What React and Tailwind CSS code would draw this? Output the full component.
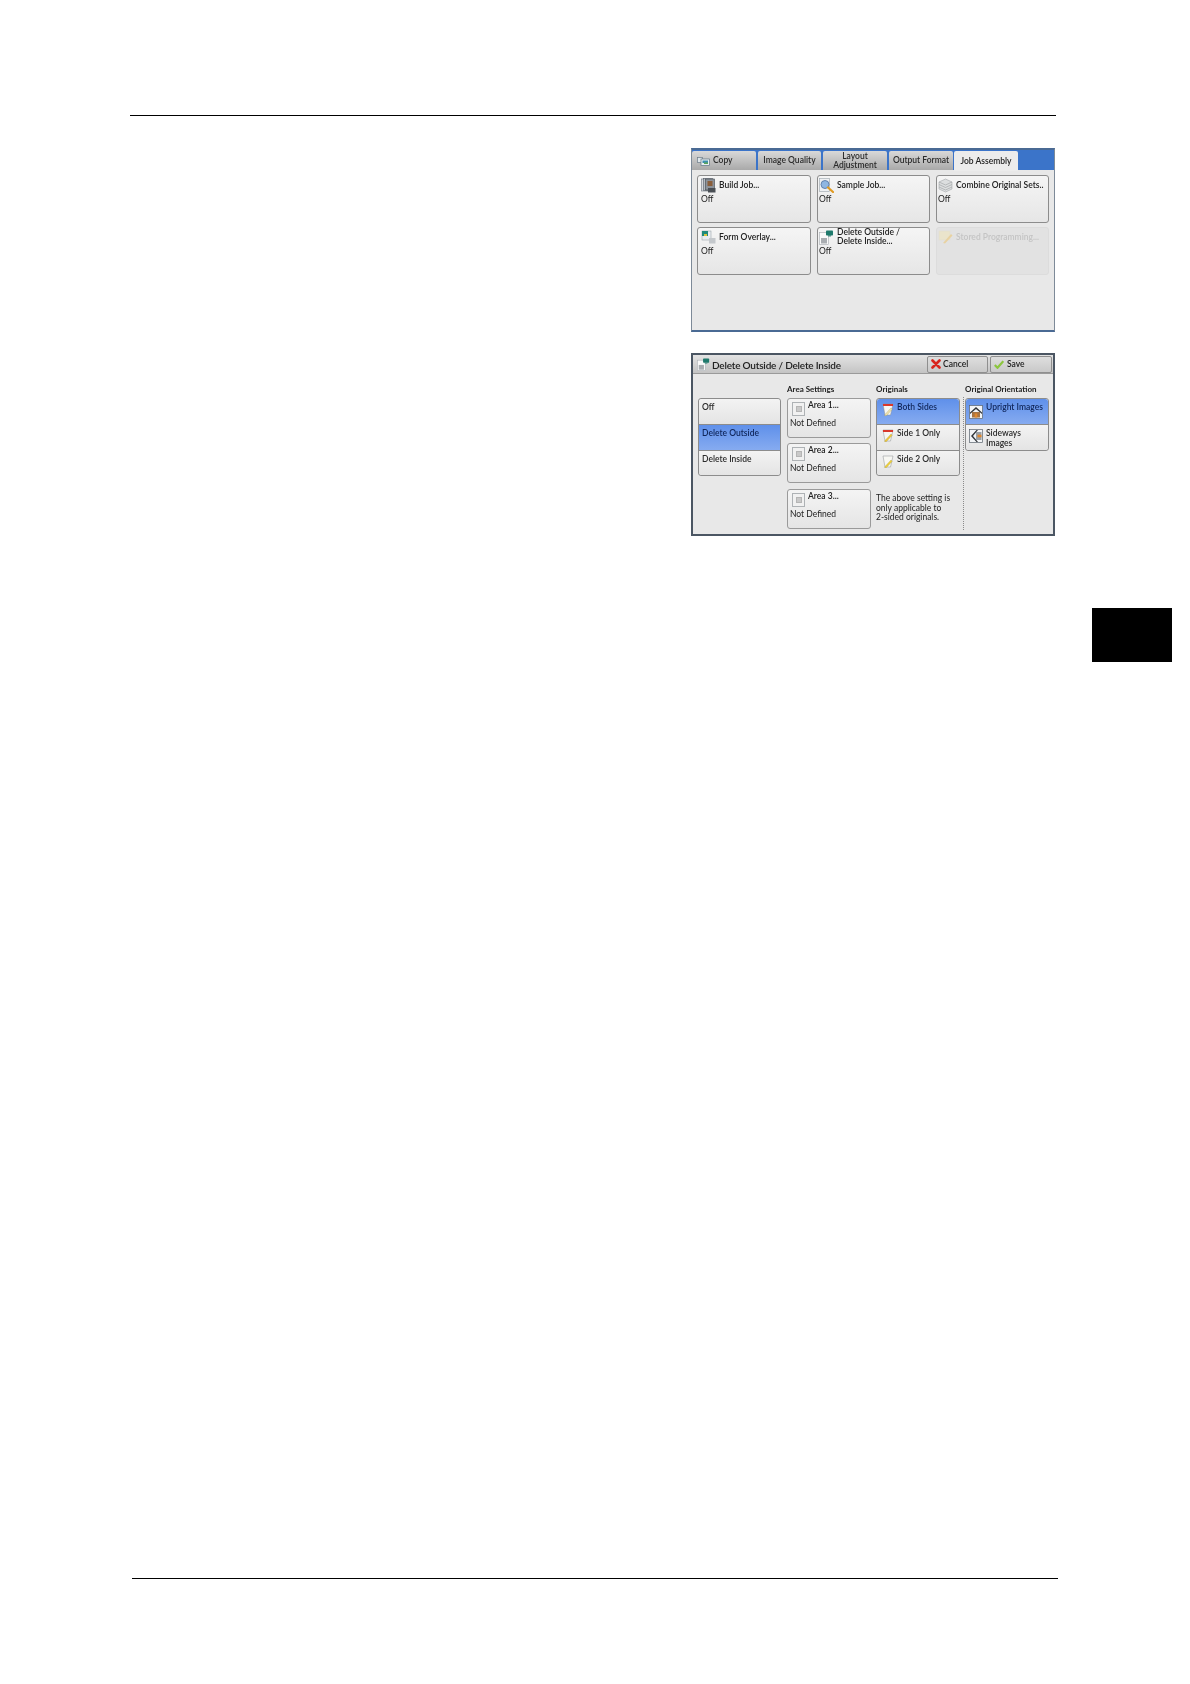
import React from 'react';

const fontFamily = 'font-["Lato","Open_Sans","Liberation_Sans",sans-serif]';

// Small drawings from the copier panel
const CopyIcon = () => (
  <svg viewBox="0 0 13 11" className="w-[13px] h-[11px] shrink-0">
    <rect x="0.5" y="2.5" width="5" height="5" fill="#dfe6ea" stroke="#6b7b88" strokeWidth="0.7" />
    <rect x="4" y="4" width="8.5" height="6.5" fill="#e8eef2" stroke="#5f7484" strokeWidth="0.7" />
    <rect x="5.5" y="5.5" width="5.5" height="2.5" fill="#3c8fb0" />
    <rect x="7" y="7.5" width="4" height="1.5" fill="#5aa65a" />
  </svg>
);

const BuildJobIcon = () => (
  <svg viewBox="0 0 15 15" className="w-[15px] h-[15px] shrink-0">
    <rect x="0.5" y="1" width="9" height="12" fill="#d7dade" stroke="#6d7680" strokeWidth="0.6" />
    <rect x="2.5" y="0.5" width="9" height="12" fill="#b8bdc4" stroke="#555d66" strokeWidth="0.6" />
    <rect x="4.5" y="1" width="9" height="11" fill="#8d939b" stroke="#3f464e" strokeWidth="0.6" />
    <rect x="6.5" y="3" width="5" height="5" fill="#8a5f3c" />
    <rect x="7" y="10" width="7.5" height="4.5" fill="#4a4f55" />
  </svg>
);

const SampleIcon = () => (
  <svg viewBox="0 0 15 15" className="w-[15px] h-[15px] shrink-0">
    <rect x="0.5" y="0.5" width="10" height="13" fill="#eef0f3" stroke="#9aa3ab" strokeWidth="0.6" />
    <circle cx="6" cy="6.5" r="4" fill="#8fb6e2" stroke="#5a7ba8" strokeWidth="0.9" />
    <path d="M9 9.5 L14 14" stroke="#e09a22" strokeWidth="2.2" strokeLinecap="round" />
  </svg>
);

const CombineIcon = () => (
  <svg viewBox="0 0 15 15" className="w-[15px] h-[15px] shrink-0">
    <path d="M7.5 1 L14 4 V11 L7.5 14 L1 11 V4 Z" fill="#dcdedf" stroke="#a5a8ab" strokeWidth="0.6" />
    <path d="M1 4 L7.5 7 L14 4 M1 6.5 L7.5 9.5 L14 6.5 M1 9 L7.5 12 L14 9" fill="none" stroke="#9a9da0" strokeWidth="0.6" />
  </svg>
);

const OverlayIcon = () => (
  <svg viewBox="0 0 15 14" className="w-[15px] h-[14px] shrink-0">
    <rect x="1" y="1" width="9" height="9" fill="#e9edf0" stroke="#8d979f" strokeWidth="0.5" />
    <rect x="1" y="1" width="6" height="5" fill="#1f8a7a" />
    <rect x="3" y="4" width="3" height="2" fill="#d8c23c" />
    <rect x="8" y="8" width="6.5" height="5.5" fill="#c4c8cc" />
  </svg>
);

const DeleteIcon = ({ className = 'w-[15px] h-[15px]' }) => (
  <svg viewBox="0 0 15 15" className={`${className} shrink-0`}>
    <rect x="0.5" y="2.5" width="9" height="12" fill="#fafafa" stroke="#a5abb0" strokeWidth="0.6" />
    <rect x="2" y="8" width="6" height="5.5" fill="#a9adb1" />
    <rect x="7" y="0.5" width="7" height="5" rx="0.8" fill="#1f7a6c" />
    <rect x="9" y="5" width="3" height="1.5" fill="#4a8f84" />
  </svg>
);

const StoredIcon = () => (
  <svg viewBox="0 0 15 14" className="w-[15px] h-[14px] shrink-0 opacity-60">
    <rect x="1" y="1" width="11" height="9" fill="#f0e6bc" stroke="#e2dcc6" strokeWidth="0.6" />
    <path d="M5 13 L13 4 L14.5 5.5 L7 13.5 Z" fill="#ecc877" />
  </svg>
);

const SideIcon = ({ band, pencil }) => (
  <svg viewBox="0 0 12 13" className="w-[12px] h-[13px] mt-[1px] shrink-0">
    <path d="M1 1 H11 L8.5 12 H3 Z" fill="#f7f7f3" stroke="#8b8f92" strokeWidth="0.5" />
    {band && <rect x="1" y="1" width="10" height="2" fill={band} />}
    <path d="M3 11.5 L9 5 L10.2 6.2 L4.5 12.5 L2.6 12.8 Z" fill={pencil} stroke="#9c8a3a" strokeWidth="0.3" />
  </svg>
);

const UprightIcon = () => (
  <svg viewBox="0 0 14 14" className="w-[14px] h-[14px] mt-[3px] shrink-0">
    <rect x="0.5" y="0.5" width="13" height="13" fill="#f2f4f6" stroke="#59636d" strokeWidth="0.7" />
    <path d="M7 2 L13 7.5 V9 L7 4 L1 9 V7.5 Z" fill="#2f3338" />
    <rect x="3" y="7" width="8" height="5.5" fill="#a77443" />
    <rect x="5.7" y="8.5" width="2.6" height="4" fill="#e0872d" />
  </svg>
);

const SidewaysIcon = () => (
  <svg viewBox="0 0 14 14" className="w-[14px] h-[14px] mt-[1px] shrink-0">
    <rect x="0.5" y="0.5" width="13" height="13" fill="#f2f4f6" stroke="#59636d" strokeWidth="0.7" />
    <path d="M2 7 L7.5 1 H9 L4 7 L9 13 H7.5 Z" fill="#2f3338" />
    <rect x="7" y="3" width="5.5" height="8" fill="#9aa0a6" />
    <rect x="8.5" y="5.7" width="4" height="2.6" fill="#e0872d" />
  </svg>
);

const CancelIcon = () => (
  <svg viewBox="0 0 10 10" className="w-[10px] h-[10px] shrink-0">
    <path d="M1.5 1.5 L8.5 8.5 M8.5 1.5 L1.5 8.5" stroke="#d8251d" strokeWidth="2.6" strokeLinecap="round" />
  </svg>
);

const SaveIcon = () => (
  <svg viewBox="0 0 10 9" className="w-[10px] h-[9px] shrink-0">
    <path d="M0.8 5 L3.5 7.8 L9.3 1.2" fill="none" stroke="#8cc63e" strokeWidth="2.2" />
  </svg>
);

const Tab = ({ width, children }) => (
  <div className={`${width} h-[19px] mt-px rounded-t-[2px] bg-gradient-to-b from-[#d9d9d9] to-[#a9a9a9] flex items-center justify-center text-center text-[8.5px] leading-[9px] font-semibold text-[#2b2b2b] whitespace-nowrap`}>
    <span>{children}</span>
  </div>
);

const FeatureButton = ({ icon, title, wide, disabled, height = 'h-[48px]' }) => (
  <div className={`${wide ? 'w-[114px] px-[3px]' : 'w-[113px] px-[1px]'} ${height} rounded-[3px] border ${disabled ? 'border-[#dcdcdc] bg-[#e2e2e2]' : 'border-[#8c8c8c] bg-gradient-to-b from-[#f5f5f5] to-[#e6e6e6]'}`}>
    <div className="flex items-center gap-[3px] h-[18px]">
      {icon}
      <span className={`text-[8.5px] leading-[9px] font-semibold whitespace-nowrap ${disabled ? 'text-[#c4c4c4]' : 'text-[#222]'}`}>{title}</span>
    </div>
    {!disabled && <div className="text-[8.5px] leading-[9px] mt-[1px] text-[#222]">Off</div>}
  </div>
);

const AreaButton = ({ name, height = 'h-[40px]' }) => (
  <div className={`${height} rounded-[3px] border border-[#9a9a9a] bg-gradient-to-b from-[#f4f4f4] to-[#e5e5e5] pl-[2px] pt-[1px]`}>
    <div className="flex gap-[3px] h-[16px]">
      <div className="w-[13px] h-[14px] ml-[2px] mt-[2px] border border-[#aeb2b5] bg-[#f1f1f1] flex items-center justify-center shrink-0">
        <div className="w-[6px] h-[6px] bg-[#c9c9c9] border border-[#b5b5b5]" />
      </div>
      <span className="pt-[1px] text-[8.5px] leading-[9px] font-semibold text-[#222]">{name}</span>
    </div>
    <div className="text-[8.5px] leading-[9px] mt-[3px] text-[#222]">Not Defined</div>
  </div>
);

const StackRow = ({ selected, first, last, icon, children, height = 'h-[25px]', pad = 'pl-[3px]' }) => (
  <div className={`${height} flex gap-[3px] ${pad} ${first ? 'rounded-t-[3px]' : 'border-t border-[#8c8c8c]'} ${last ? 'rounded-b-[3px]' : ''} ${selected ? 'bg-gradient-to-b from-[#5f90ea] to-[#86abf0]' : 'bg-gradient-to-b from-[#f3f3f3] to-[#e4e4e4]'} pt-[3px]`}>
    {icon}
    <span className={`text-[8.5px] leading-[10px] font-semibold whitespace-nowrap ${selected ? 'text-[#10265a]' : 'text-[#2b2b2b]'}`}>{children}</span>
  </div>
);

const ColumnLabel = ({ children }) => (
  <div className="h-[24px] pt-[10px] text-[8px] leading-[10px] font-bold text-[#222] whitespace-nowrap">{children}</div>
);

const HeaderButton = ({ icon, label, width, gap }) => (
  <div className={`${width} ${gap} h-[17px] rounded-[2px] border border-[#8f8f8f] bg-gradient-to-b from-[#dedede] to-[#c9c9c9] flex items-center text-[8.5px] font-semibold text-[#222]`}>
    {icon}
    <span>{label}</span>
  </div>
);

export default function App() {
  return (
    <div className={`w-[1190px] h-[1684px] bg-white flex flex-col overflow-hidden ${fontFamily}`}>
      <div className="ml-[130px] mt-[115px] w-[926px] h-px bg-black shrink-0" />

      <div className="ml-[691px] mt-[32px] w-[364px] h-[184px] shrink-0 border-x border-b-2 border-t-2 border-x-[#7d8a98] border-t-[#4a6a94] border-b-[#4a6a94] bg-[#e8e8e8] blur-[0.3px]">
        <div className="flex h-[20px] bg-[#3b74c9] gap-[2px]">
          <div className="w-[64px] h-[19px] mt-px pl-[5px] rounded-t-[2px] bg-gradient-to-b from-[#d9d9d9] to-[#a9a9a9] flex items-center gap-[3px] text-[8.5px] font-semibold text-[#2b2b2b]">
            <CopyIcon />
            <span>Copy</span>
          </div>
          <Tab width="w-[63px]">Image Quality</Tab>
          <Tab width="w-[64px]">
            Layout
            <br />
            Adjustment
          </Tab>
          <Tab width="w-[64px]">Output Format</Tab>
          <div className="w-[64px] -ml-px h-[20px] mt-px rounded-t-[2px] bg-[#ececec] flex items-center justify-center text-[8.5px] font-semibold text-[#222]">
            Job Assembly
          </div>
        </div>
        <div className="pl-[5px] pt-[5px] flex flex-col gap-[4px]">
          <div className="flex gap-[6px]">
            <FeatureButton wide icon={<BuildJobIcon />} title="Build Job..." />
            <FeatureButton icon={<SampleIcon />} title="Sample Job..." />
            <FeatureButton icon={<CombineIcon />} title="Combine Original Sets.." />
          </div>
          <div className="flex gap-[6px]">
            <FeatureButton wide icon={<OverlayIcon />} title="Form Overlay..." />
            <FeatureButton
              icon={<DeleteIcon />}
              title={
                <>
                  Delete Outside /<br />
                  Delete Inside...
                </>
              }
            />
            <FeatureButton disabled icon={<StoredIcon />} title="Stored Programming..." />
          </div>
        </div>
      </div>

      <div className="ml-[691px] mt-[21px] w-[364px] h-[183px] shrink-0 border-2 border-[#4b5663] bg-[#e8e8e8] blur-[0.3px]">
        <div className="h-[19px] flex items-center bg-gradient-to-b from-[#e3e3e3] to-[#c4c4c4] border-b border-[#9a9a9a] pl-[4px]">
          <DeleteIcon className="w-[13px] h-[13px]" />
          <span className="ml-[2px] mt-[2px] text-[10px] tracking-[-0.2px] font-semibold text-[#222] whitespace-nowrap">Delete Outside / Delete Inside</span>
          <div className="ml-auto mr-[1px] flex gap-[2px]">
            <HeaderButton icon={<CancelIcon />} label="Cancel" width="w-[61px]" gap="pl-[3px] gap-[2px]" />
            <HeaderButton icon={<SaveIcon />} label="Save" width="w-[62px]" gap="pl-[3px] gap-[3px]" />
          </div>
        </div>

        <div className="flex pl-[5px]">
          <div className="w-[83px]">
            <div className="h-[24px]" />
            <div className="rounded-[3px] border border-[#8c8c8c]">
              <StackRow first>Off</StackRow>
              <StackRow selected height="h-[26px]">Delete Outside</StackRow>
              <StackRow last>Delete Inside</StackRow>
            </div>
          </div>

          <div className="w-[84px] ml-[6px]">
            <ColumnLabel>Area Settings</ColumnLabel>
            <div className="flex flex-col gap-[5px]">
              <AreaButton name="Area 1..." />
              <AreaButton name="Area 2..." />
              <div className="mt-[1px]">
                <AreaButton name="Area 3..." />
              </div>
            </div>
          </div>

          <div className="w-[84px] ml-[5px]">
            <ColumnLabel>Originals</ColumnLabel>
            <div className="rounded-[3px] border border-[#8c8c8c]">
              <StackRow first selected pad="pl-[5px]" icon={<SideIcon band="#d9382c" pencil="#efe3b0" />}>
                Both Sides
              </StackRow>
              <StackRow pad="pl-[5px]" height="h-[26px]" icon={<SideIcon band="#d9382c" pencil="#f0c93a" />}>
                Side 1 Only
              </StackRow>
              <StackRow last pad="pl-[5px]" icon={<SideIcon pencil="#f0d23a" />}>
                Side 2 Only
              </StackRow>
            </div>
            <div className="mt-[18px] text-[8.5px] leading-[9.5px] text-[#222] whitespace-nowrap">
              The above setting is
              <br />
              only applicable to
              <br />
              2-sided originals.
            </div>
          </div>

          <div className="ml-[3px] mt-[23px] h-[133px] border-l border-dotted border-[#8a8a8a]" />

          <div className="w-[84px] ml-[1px]">
            <ColumnLabel>Original Orientation</ColumnLabel>
            <div className="rounded-[3px] border border-[#8c8c8c]">
              <StackRow first selected icon={<UprightIcon />}>
                Upright Images
              </StackRow>
              <StackRow last height="h-[26px]" icon={<SidewaysIcon />}>
                <span className="block pt-[1px] leading-[9.5px]">
                  Sideways
                  <br />
                  Images
                </span>
              </StackRow>
            </div>
          </div>
        </div>
      </div>

      <div className="ml-[1092px] mt-[72px] w-[80px] h-[54px] bg-black shrink-0" />

      <div className="ml-[132px] mt-[916px] w-[926px] h-px bg-black shrink-0" />
    </div>
  );
}
